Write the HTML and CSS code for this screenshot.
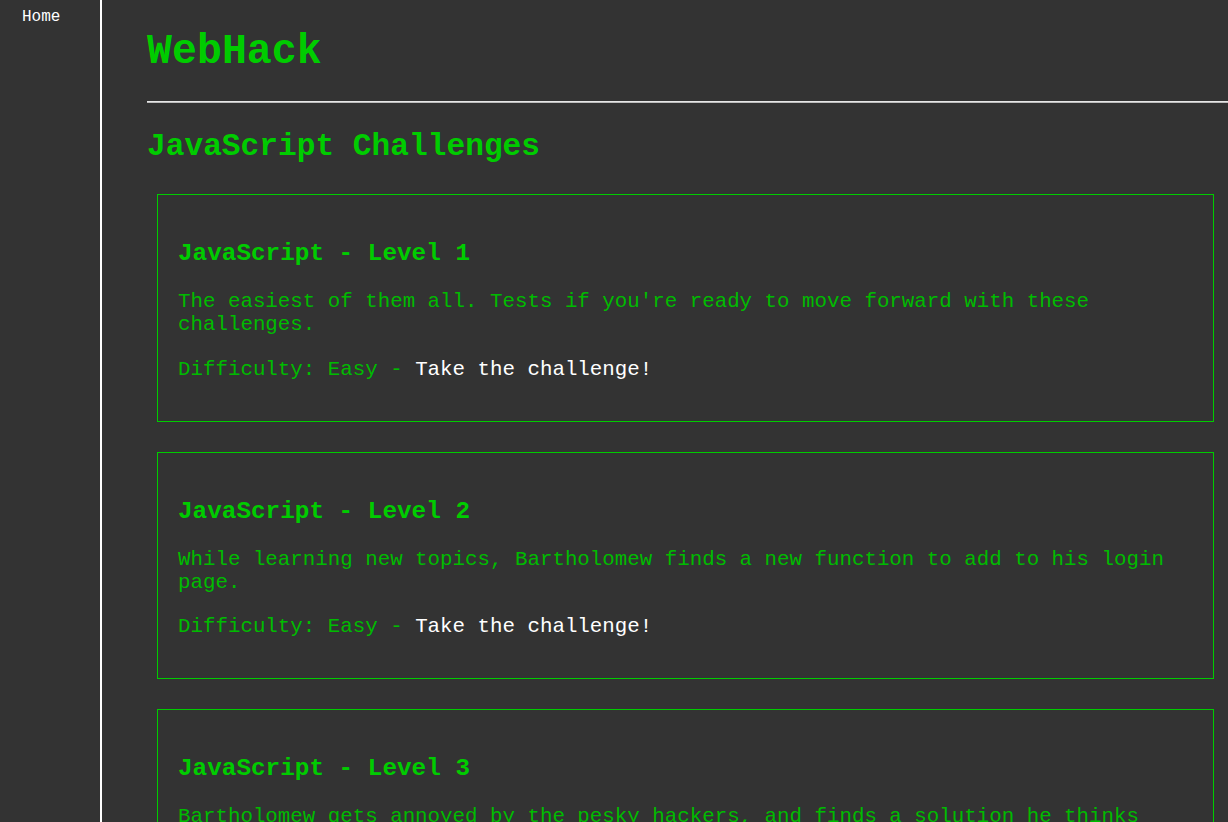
FILE: index.html
```html
<!DOCTYPE html>
<html lang="en">
<head>
<meta charset="utf-8">
<title>WebHack - JavaScript Challenges</title>
<link rel="stylesheet" href="styles.css">
</head>
<body>
<div class="layout">
  <nav class="sidebar">
    <a class="nav-link" href="#">Home</a>
  </nav>
  <main class="main">
    <h1 class="site-title">WebHack</h1>
    <hr class="divider">
    <h2 class="section-title">JavaScript Challenges</h2>

    <div class="card">
      <h3 class="card-title">JavaScript - Level 1</h3>
      <p class="card-text">The easiest of them all. Tests if you're ready to move forward with these challenges.</p>
      <p class="card-text">Difficulty: Easy - <a class="card-link" href="#">Take the challenge!</a></p>
    </div>

    <div class="card">
      <h3 class="card-title">JavaScript - Level 2</h3>
      <p class="card-text">While learning new topics, Bartholomew finds a new function to add to his login page.</p>
      <p class="card-text">Difficulty: Easy - <a class="card-link" href="#">Take the challenge!</a></p>
    </div>

    <div class="card">
      <h3 class="card-title">JavaScript - Level 3</h3>
      <p class="card-text">Bartholomew gets annoyed by the pesky hackers, and finds a solution he thinks will keep them out.</p>
      <p class="card-text">Difficulty: Medium - <a class="card-link" href="#">Take the challenge!</a></p>
    </div>
  </main>
</div>
</body>
</html>
```

FILE: styles.css
```css
html, body {
  margin: 0;
  padding: 0;
  background: #333333;
}

body {
  font-family: "Liberation Mono", "Courier New", monospace;
  font-size: 16px;
  overflow: hidden;
}

.layout {
  display: flex;
  min-height: 100vh;
}

.sidebar {
  width: 100px;
  flex: 0 0 100px;
  border-right: 2px solid #ffffff;
  min-height: 100vh;
  padding-top: 8px;
  box-sizing: content-box;
}

.nav-link {
  display: block;
  padding-left: 22px;
  color: #ffffff;
  text-decoration: none;
  font-size: 16px;
  line-height: 18px;
}

.main {
  flex: 1;
  padding-left: 45px;
  font-size: 20.8px;
  color: #00cc00;
  min-width: 0;
}

.site-title {
  font-size: 2em;
  font-weight: bold;
  margin: 0.67em 0 26px;
  color: #00cc00;
}

.divider {
  margin: 0;
  border: 0;
  border-top: 1px solid #e6e6e6;
  border-bottom: 1px solid #bdbdbd;
  height: 0;
}

.section-title {
  font-size: 1.5em;
  font-weight: bold;
  margin: 0.83em 0 30px;
  color: #00cc00;
}

.card {
  border: 1px solid #00cc00;
  margin: 0 14px 30px 10px;
  padding: 0 20px;
}

.card-title {
  font-size: 1.17em;
  font-weight: bold;
  margin: 45px 0 23px;
  color: #00cc00;
}

.card-text {
  margin: 0 0 21.8px;
  color: #00bb00;
}

.card-text:last-child {
  margin-bottom: 40px;
}

.card-link {
  color: #ffffff;
  text-decoration: none;
}
```
